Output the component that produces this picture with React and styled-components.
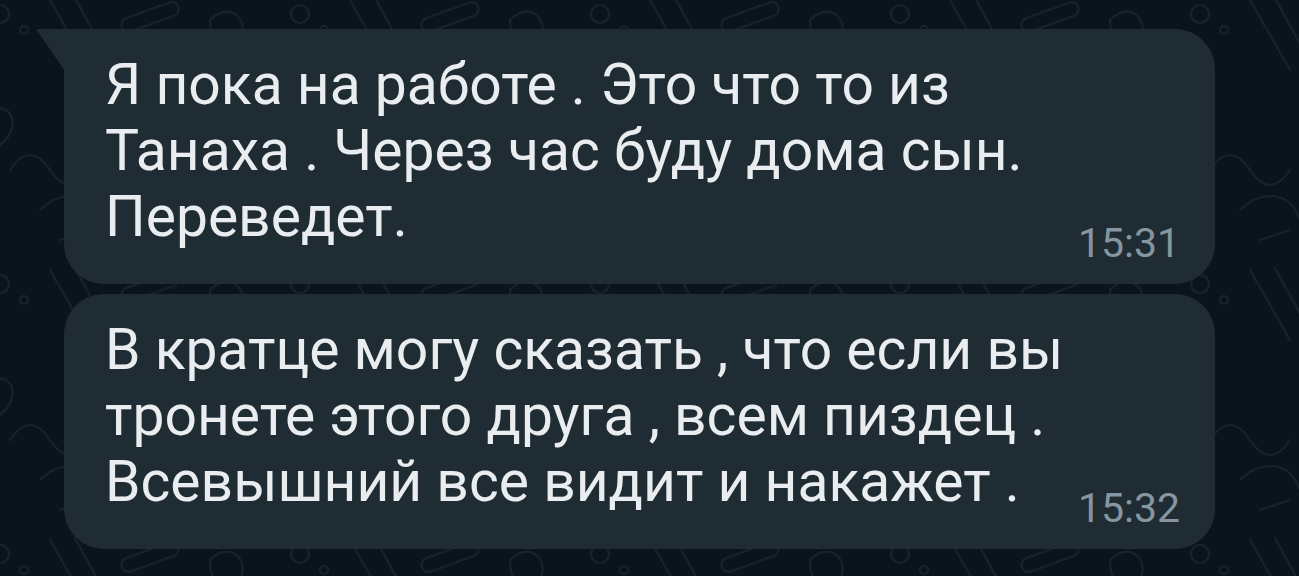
import React from 'react';
import styled, { createGlobalStyle } from 'styled-components';

const messages = [
  {
    id: 1,
    tail: true,
    text: 'Я пока на работе . Это что то из\nТанаха . Через час буду дома сын.\nПереведет.',
    time: '15:31',
  },
  {
    id: 2,
    tail: false,
    text: 'В кратце могу сказать , что если вы\nтронете этого друга , всем пиздец .\nВсевышний все видит и накажет .',
    time: '15:32',
  },
];

/* faint doodle wallpaper, drawn as one svg tile */
const doodle = `<svg xmlns='http://www.w3.org/2000/svg' width='300' height='270' viewBox='0 0 300 270'>
<g fill='none' stroke='#172229' stroke-width='2.2' stroke-linecap='round' stroke-linejoin='round'>
<circle cx='20' cy='24' r='9'/><circle cx='44' cy='40' r='4'/>
<path d='M70 10 l40 70 M95 8 l30 55'/>
<rect x='140' y='20' width='60' height='14' rx='7' transform='rotate(-20 170 27)'/>
<path d='M230 30 c20 -20 40 0 30 20 c-10 20 -30 10 -30 -20z'/>
<circle cx='276' cy='90' r='6'/>
<path d='M10 120 c30 -10 30 30 0 40 M30 180 q20 -30 40 0 t40 0'/>
<path d='M180 110 c10 -25 40 -25 45 0 c5 25 -30 45 -45 25'/>
<circle cx='130' cy='150' r='5'/><circle cx='150' cy='160' r='3'/>
<path d='M240 160 l30 30 l-20 20 l-30 -30z'/>
<path d='M60 220 c20 -20 50 -20 60 10 M80 250 l30 -10'/>
<circle cx='170' cy='230' r='8'/><circle cx='195' cy='245' r='5'/>
<path d='M255 225 q15 -20 30 0 q-15 25 -30 0z'/>
</g></svg>`;

const GlobalStyle = createGlobalStyle`
  html, body {
    margin: 0;
    padding: 0;
    background: #0b141a;
  }
  body {
    font-family: Roboto, "Noto Sans", "Liberation Sans", sans-serif;
  }
`;

const Screen = styled.div`
  width: 1299px;
  height: 576px;
  overflow: hidden;
  background-color: #0b141a;
  background-image: url("data:image/svg+xml,${encodeURIComponent(doodle)}");
  background-position: -20px -10px;
  display: flex;
  flex-direction: column;
  gap: 10px;
  padding: 29px 0 0 64px;
  box-sizing: border-box;
`;

const Bubble = styled.div`
  position: relative;
  width: 1151px;
  box-sizing: border-box;
  background: #202c33;
  border-radius: ${(p) => (p.$tail ? '0 40px 40px 40px' : '40px')};
  padding: 23px 35px 0 41px;
  display: flex;
  justify-content: space-between;
  align-items: flex-end;

  ${(p) => p.$tail && `
    &::before {
      content: '';
      position: absolute;
      left: -28px;
      top: 0;
      width: 29px;
      height: 42px;
      background: #202c33;
      clip-path: polygon(0 0, 100% 0, 100% 100%);
      border-top-left-radius: 3px;
    }
  `}
`;

const Text = styled.div`
  color: #e9edef;
  font-size: 57px;
  line-height: 66px;
  white-space: pre-line;
  padding-bottom: 34px;
`;

const Time = styled.span`
  color: #8696a0;
  font-size: 41px;
  line-height: 42px;
  margin-bottom: 20px;
  flex-shrink: 0;
`;

const App = () => (
  <>
    <GlobalStyle />
    <Screen>
      {messages.map((m) => (
        <Bubble key={m.id} $tail={m.tail}>
          <Text>{m.text}</Text>
          <Time>{m.time}</Time>
        </Bubble>
      ))}
    </Screen>
  </>
);

export default App;
